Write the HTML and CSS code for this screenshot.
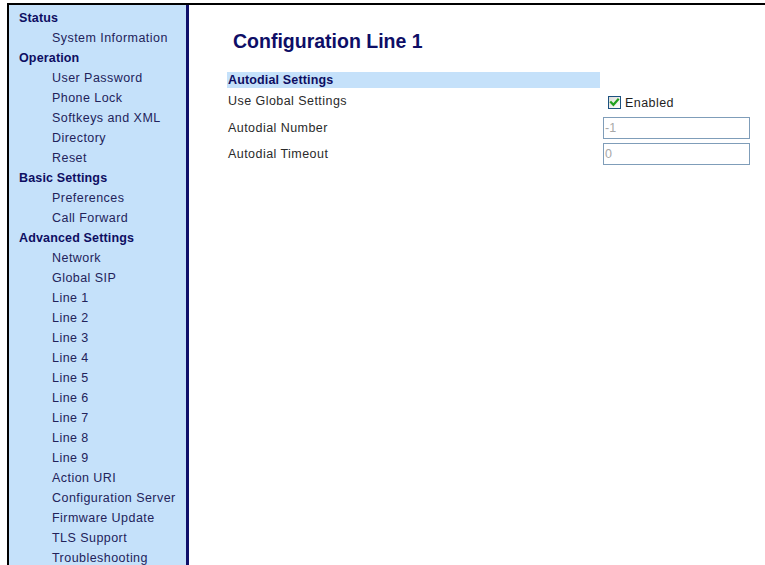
FILE: index.html
```html
<!DOCTYPE html>
<html lang="en">
<head>
<meta charset="utf-8">
<title>Configuration Line 1</title>
<link rel="stylesheet" href="styles.css">
</head>
<body>
<div class="frame">
  <nav class="sidebar">
    <div class="sec">Status</div>
    <div class="item">System Information</div>
    <div class="sec">Operation</div>
    <div class="item">User Password</div>
    <div class="item">Phone Lock</div>
    <div class="item">Softkeys and XML</div>
    <div class="item">Directory</div>
    <div class="item">Reset</div>
    <div class="sec">Basic Settings</div>
    <div class="item">Preferences</div>
    <div class="item">Call Forward</div>
    <div class="sec">Advanced Settings</div>
    <div class="item">Network</div>
    <div class="item">Global SIP</div>
    <div class="item">Line 1</div>
    <div class="item">Line 2</div>
    <div class="item">Line 3</div>
    <div class="item">Line 4</div>
    <div class="item">Line 5</div>
    <div class="item">Line 6</div>
    <div class="item">Line 7</div>
    <div class="item">Line 8</div>
    <div class="item">Line 9</div>
    <div class="item">Action URI</div>
    <div class="item">Configuration Server</div>
    <div class="item">Firmware Update</div>
    <div class="item">TLS Support</div>
    <div class="item">Troubleshooting</div>
  </nav>
  <main class="main">
    <h1 class="title">Configuration Line 1</h1>
    <div class="settings">
      <div class="bar">Autodial Settings</div>
      <div class="bar-spacer"></div>

      <div class="label row1">Use Global Settings</div>
      <label class="ctrl row1 check-wrap">
        <span class="checkbox">
          <svg width="11" height="11" viewBox="0 0 11 11"><path d="M2 5.2 L4.4 7.8 L9 2.6" fill="none" stroke="#21a121" stroke-width="2.2" stroke-linecap="square"/></svg>
        </span>
        <span class="check-text">Enabled</span>
      </label>

      <div class="label row">Autodial Number</div>
      <div class="ctrl row"><div class="field">-1</div></div>

      <div class="label row">Autodial Timeout</div>
      <div class="ctrl row"><div class="field">0</div></div>
    </div>
  </main>
</div>
</body>
</html>
```

FILE: styles.css
```css
html, body {
  height: 100%;
}

body {
  margin: 0;
  padding: 3px 0 0 7px;
  box-sizing: border-box;
  overflow: hidden;
  background: #ffffff;
  font-family: "Liberation Sans", Arial, sans-serif;
  font-size: 12.5px;
  color: #2a2a2a;
}

.frame {
  display: flex;
  height: 100%;
  border-top: 2px solid #000000;
  border-left: 2px solid #000000;
  box-sizing: border-box;
}

/* left navigation column */
.sidebar {
  flex: 0 0 auto;
  width: 177px;
  background: #c5e1fa;
  border-right: 3px solid #10106a;
  padding-top: 3px;
  box-sizing: content-box;
}

.sec,
.item {
  height: 20px;
  line-height: 20px;
  white-space: nowrap;
}

.sec {
  padding-left: 10px;
  font-weight: bold;
  color: #0e0e62;
  letter-spacing: 0.15px;
}

.item {
  padding-left: 43px;
  color: #23235a;
  letter-spacing: 0.45px;
}

/* content area */
.main {
  flex: 1 1 auto;
  padding: 24px 0 0 38px;
}

.title {
  margin: 0 0 19px 6px;
  font-size: 19.5px;
  line-height: 24px;
  font-weight: bold;
  color: #0e0e66;
}

.settings {
  display: grid;
  grid-template-columns: 373px 147px;
  grid-template-rows: 16px 29px 26px 26px;
  column-gap: 3px;
}

.bar {
  background: #c5e1fa;
  line-height: 16px;
  padding-left: 1px;
  font-weight: bold;
  color: #0e0e62;
  letter-spacing: 0.15px;
}

.label {
  padding-left: 1px;
  letter-spacing: 0.45px;
  color: #2a2a2a;
}

.label.row1 {
  align-self: center;
  line-height: 15px;
  padding-bottom: 2px;
}

.label.row {
  line-height: 22px;
}

.check-wrap {
  display: flex;
  align-items: center;
  gap: 4px;
  padding-left: 5px;
}

.checkbox {
  width: 11px;
  height: 11px;
  border: 1px solid #1c5180;
  background: linear-gradient(135deg, #dcdcd7 0%, #ffffff 100%);
  display: flex;
  align-items: center;
  justify-content: center;
}

.checkbox svg {
  display: block;
}

.check-text {
  letter-spacing: 0.45px;
  color: #1e1e1e;
}

.field {
  height: 22px;
  border: 1px solid #7f9db9;
  box-sizing: border-box;
  background: #ffffff;
  padding-left: 1px;
  line-height: 20px;
  color: #a8a8a8;
}
```
